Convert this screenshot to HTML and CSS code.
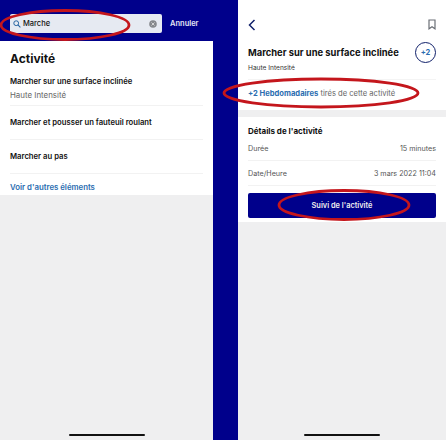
FILE: index.html
```html
<!DOCTYPE html>
<html>
<head>
    <title>Activité</title>
    <link rel="stylesheet" href="styles.css">
</head>
<body>
    <div class="screens">
        <div class="screen search-screen">
            <div class="search-bar">
                <div class="search-box">
                    <svg class="search-icon" viewBox="0 0 10 10" width="8" height="8">
                        <circle cx="4" cy="4" r="3" fill="none" stroke="#1f5f9e" stroke-width="1.2"/>
                        <path d="M6.2 6.2 L9.2 9.2" stroke="#1f5f9e" stroke-width="1.3"/>
                    </svg>
                    <span class="search-text">Marche</span>
                    <span class="search-clear">
                        <svg viewBox="0 0 8 8" width="8" height="8">
                            <circle cx="4" cy="4" r="3.8" fill="#85888c"/>
                            <path d="M2.5 2.5 L5.5 5.5 M5.5 2.5 L2.5 5.5" stroke="#e8e8e8" stroke-width="0.8"/>
                        </svg>
                    </span>
                </div>
                <span class="cancel">Annuler</span>
            </div>
            <div class="results">
                <h1>Activité</h1>
                <div class="result first">
                    <div class="result-name">Marcher sur une surface inclinée</div>
                    <div class="result-sub">Haute Intensité</div>
                </div>
                <div class="result">
                    <div class="result-name">Marcher et pousser un fauteuil roulant</div>
                </div>
                <div class="result">
                    <div class="result-name">Marcher au pas</div>
                </div>
                <div class="more">Voir d'autres éléments</div>
            </div>
            <div class="home-bar"></div>
        </div>

        <div class="screen detail-screen">
            <div class="detail-top">
                <div class="nav-row">
                    <svg viewBox="0 0 8 12" width="8" height="12">
                        <path d="M6.5 1 L1.5 6 L6.5 11" fill="none" stroke="#10206a" stroke-width="1.5"/>
                    </svg>
                    <svg viewBox="0 0 8 11" width="8" height="11">
                        <path d="M1 1 H7 V9.8 L4 7.8 L1 9.8 Z" fill="none" stroke="#6b6f76" stroke-width="1.2"/>
                    </svg>
                </div>
                <div class="title-row">
                    <div class="detail-title">Marcher sur une surface inclinée</div>
                    <div class="badge">+2</div>
                </div>
                <div class="detail-sub">Haute Intensité</div>
                <div class="points"><b>+2 Hebdomadaires</b> tirés de cette activité</div>
            </div>
            <div class="detail-info">
                <h2>Détails de l'activité</h2>
                <div class="info-row"><span>Durée</span><span>15 minutes</span></div>
                <div class="info-row"><span>Date/Heure</span><span>3 mars 2022 11:04</span></div>
                <div class="track-btn">Suivi de l'activité</div>
            </div>
            <div class="home-bar"></div>
        </div>
    </div>

    <svg class="marks" viewBox="0 0 446 440" width="446" height="440">
        <ellipse cx="65" cy="25" rx="64" ry="14.5"/>
        <ellipse cx="321" cy="93" rx="97" ry="14"/>
        <ellipse cx="344" cy="205" rx="65" ry="14.5"/>
    </svg>
</body>
</html>
```

FILE: styles.css
```css
body {
    margin: 0;
    background-color: #00008b;
    font-family: "Inter", "Liberation Sans", sans-serif;
    color: #111;
}

.screens {
    display: flex;
    justify-content: space-between;
    width: 446px;
    height: 440px;
    overflow: hidden;
}

.screen {
    display: flex;
    flex-direction: column;
    position: relative;
    background-color: #efeff0;
}

.search-screen {
    width: 213px;
}

.detail-screen {
    width: 208px;
}

.search-bar {
    display: flex;
    align-items: center;
    height: 41px;
    padding: 14px 0 8px 10px;
    box-sizing: border-box;
    background-color: #00008b;
}

.search-box {
    display: flex;
    align-items: center;
    gap: 2px;
    width: 152px;
    height: 19px;
    padding: 0 5px 0 3px;
    box-sizing: border-box;
    background-color: #e6eaf2;
    border-radius: 2px;
}

.search-text {
    flex: 1;
    font-size: 7.5px;
    font-weight: 500;
}

.search-clear {
    display: flex;
}

.cancel {
    margin-left: 8px;
    color: #e4e6f5;
    font-size: 7.5px;
    font-weight: 600;
}

.results {
    height: 154px;
    padding: 0 10px;
    box-sizing: border-box;
    background-color: #fff;
}

h1 {
    margin: 0;
    padding-top: 11px;
    font-size: 12px;
    line-height: 14px;
    font-weight: 700;
}

.result {
    height: 34px;
    box-sizing: border-box;
    padding-top: 12px;
    border-bottom: 1px solid #f2f2f2;
}

.result.first {
    height: 40px;
    padding-top: 11px;
}

.result-name {
    font-size: 7.7px;
    line-height: 10px;
    font-weight: 600;
}

.result-sub {
    margin-top: 3px;
    font-size: 7.9px;
    line-height: 10px;
    color: #666;
}

.more {
    margin-top: 8px;
    font-size: 7.8px;
    line-height: 10px;
    font-weight: 600;
    color: #2a6db0;
}

.detail-top {
    height: 110px;
    padding: 19px 10px 0;
    box-sizing: border-box;
    background-color: #fff;
}

.nav-row {
    display: flex;
    justify-content: space-between;
}

.title-row {
    display: flex;
    align-items: center;
    justify-content: space-between;
    margin-top: 11px;
}

.detail-title {
    font-size: 9.4px;
    font-weight: 700;
    white-space: nowrap;
}

.badge {
    display: flex;
    align-items: center;
    justify-content: center;
    width: 19px;
    height: 19px;
    border: 1px solid #10206a;
    border-radius: 50%;
    color: #2a6db0;
    font-size: 7.5px;
    font-weight: 700;
}

.detail-sub {
    margin-top: 1px;
    font-size: 6.6px;
    line-height: 8px;
    color: #333;
}

.points {
    margin-top: 7px;
    padding-top: 9px;
    border-top: 1px solid #f4f4f4;
    font-size: 7.6px;
    line-height: 10px;
    color: #666;
}

.points b {
    color: #2a6db0;
    font-weight: 700;
}

.detail-info {
    margin-top: 7px;
    height: 105px;
    padding: 9px 10px 0;
    box-sizing: border-box;
    background-color: #fff;
}

h2 {
    margin: 0;
    font-size: 8px;
    line-height: 10px;
    font-weight: 700;
}

.info-row {
    display: flex;
    justify-content: space-between;
    height: 25px;
    padding-top: 8px;
    box-sizing: border-box;
    border-bottom: 1px solid #f2f2f2;
    font-size: 7.2px;
    line-height: 10px;
    color: #555;
}

.info-row:last-of-type {
    border-bottom: none;
}

.track-btn {
    height: 25px;
    margin-top: 7px;
    line-height: 25px;
    text-align: center;
    background-color: #00008b;
    border-radius: 2px;
    color: #eee;
    font-size: 7.4px;
    font-weight: 600;
}

.home-bar {
    position: absolute;
    bottom: 4px;
    left: 50%;
    width: 76px;
    height: 2px;
    margin-left: -38px;
    background-color: #111;
    border-radius: 1px;
}

.marks {
    position: absolute;
    top: 0;
    left: 0;
    fill: none;
    stroke: #c4161c;
    stroke-width: 2.8;
}
```
